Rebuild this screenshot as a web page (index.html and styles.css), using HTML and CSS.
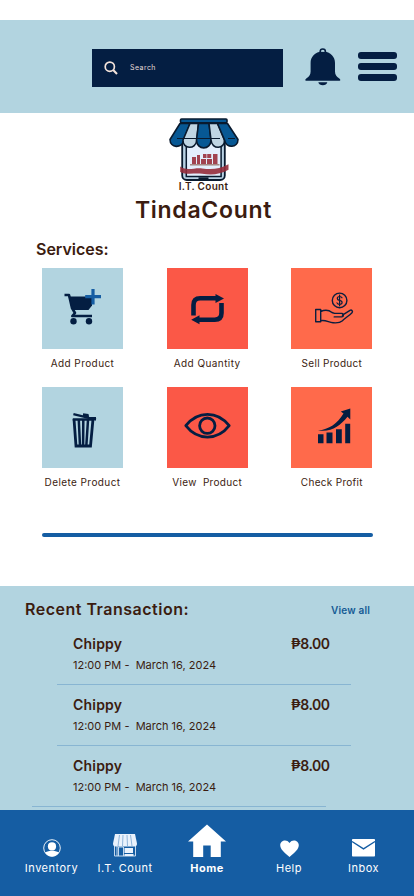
FILE: index.html
```html
<!DOCTYPE html>
<html lang="en">
<head>
<meta charset="utf-8">
<meta name="viewport" content="width=device-width, initial-scale=1">
<title>TindaCount</title>
<link rel="stylesheet" href="styles.css">
</head>
<body>
<header class="topbar">
  <div class="search">
    <svg width="14" height="14" viewBox="0 0 14 14" fill="none" stroke="#f3e3da" stroke-width="1.7"><circle cx="5.8" cy="5.7" r="4.6"/><path d="M9.2 9.1 13 12.9" stroke-width="2.1"/></svg>
    <span class="search-text">Search</span>
  </div>
  <svg class="bell" width="36" height="39" viewBox="0 0 36 39" fill="#041e42"><circle cx="17.8" cy="3.6" r="2.6" fill="none" stroke="#041e42" stroke-width="1.6"/><path d="M17.8 3.6C9.5 3.6 5.6 9.500 5.600 15v8.500c0 3.500-1.600 5-4 6.700-1.700 1.200-1.600 2.500-.6 2.500h33.600c1 0 1.100-1.300-.6-2.500-2.400-1.700-4-3.200-4-6.700V15c0-5.500-3.900-11.400-12.200-11.400Z"/><path d="M13.300 34.200h9c-.5 4-8.500 4-9 0Z"/><path d="M16.200 3.700a1.600 1.600 0 0 1 3.200 0Z" fill="#b2d4e0"/></svg>
  <div class="menu"><i></i><i></i><i></i></div>
</header>
<main>
  <section class="brand">
    <svg width="72" height="66" viewBox="0 0 72 66">
      <rect x="14.200" y="10" width="42.600" height="52" rx="4.500" fill="#b9d2e4" stroke="#091a2e" stroke-width="1.800"/>
      <rect x="18.300" y="10" width="34.800" height="48.500" fill="#e3effd" stroke="#091a2e" stroke-width="1.500"/>
      <path d="M30.500 60.300h10" stroke="#091a2e" stroke-width="2"/>
      <g fill="#a14350"><path d="M24 39h4v7h-4zM29 37h3v9h-3zM33 41h5v5h-5zM39 41h5v5h-5zM35 36h3.500v4H35zM39.200 36h4v4h-4zM45 36h4.500v10H45z"/></g>
      <path d="M22 46.800h29.500" stroke="#99766f" stroke-width="1.300"/>
      <path d="M12.200 48.600c7 4.800 14 .8 22 1.800 10 1.300 17 .6 26.300-4.200v5.600c-9 5-17 5.200-26.300 4-8-1-15 1.500-22-1.800Z" fill="#952c3b" fill-opacity=".9"/>
      <g stroke="#091a2e" stroke-width="1.600" stroke-linejoin="round">
        <path d="M12 5.500 2 21.500c0 8.700 12 9.200 13.500 1L22 5.500Z" fill="#075894"/>
        <path d="M22 5.500l-7 16.500c-.5 9.500 13 10 13.800 0L30.500 5.500Z" fill="#bfd5e3"/>
        <path d="M30.500 5.500l-2 16.500c0 10.500 14.500 10.500 14.500 0L41 5.500Z" fill="#075894"/>
        <path d="M41 5.500l2 16.500c.8 10 14 9.500 13.500 0L49.500 5.500Z" fill="#bfd5e3"/>
        <path d="M49.500 5.500l7 16.500c1.500 8.700 13.500 8.200 13.500-.5L59.500 5.500Z" fill="#075894"/>
        <rect x="12.500" y="1" width="46.500" height="3.800" rx="1" fill="#075894"/>
      </g>
      <path d="M9 20.500h43M60 20.500h7" stroke="#091a2e" stroke-width="1.200"/>
    </svg>
    <div class="tagline"><span>I.T. Count</span></div>
    <h1><span>TindaCount</span></h1>
  </section>
  <h2 class="services-title"><span>Services:</span></h2>
  <section class="grid">
    <div class="service"><div class="tile blue">
      <svg width="81" height="81" viewBox="0 0 81 81" fill="#041e42"><path d="M22.500 27h4.500l3 13 3 5-2.700 3H50" fill="none" stroke="#041e42" stroke-width="2.600" stroke-linejoin="round"/><path d="M26.500 28.500H50v9l-3.500 4.500H31.200Z"/><circle cx="31.500" cy="53.200" r="3.200"/><circle cx="47" cy="53.200" r="3.200"/><path d="M51 21v15.500M43.200 28.700H59" stroke="#155da3" stroke-width="3.200"/></svg>
    </div><span>Add Product</span></div>
    <div class="service"><div class="tile red">
      <svg width="81" height="81" viewBox="0 0 81 81" fill="none" stroke="#041e42" stroke-width="4.600"><path d="M26.500 47.500V37q0-6.700 6.700-6.700H49M54.500 35v10q0 6.700-6.700 6.700H32"/><path d="M48.500 26 57 30.500 48.500 35ZM32.500 47.300 24.200 51.700l8.300 4.500Z" fill="#041e42" stroke="none"/></svg>
    </div><span>Add Quantity</span></div>
    <div class="service"><div class="tile orange">
      <svg width="81" height="81" viewBox="0 0 81 81" fill="none" stroke="#0b1e3f" stroke-width="1.400" stroke-linejoin="round" stroke-linecap="round"><circle cx="48.600" cy="32.400" r="7.300"/><path d="M51 29.800q-.6-1.300-2.400-1.300-2.300 0-2.300 1.900 0 1.500 2.300 2 2.500.5 2.500 2.200 0 1.800-2.500 1.800-2 0-2.600-1.500M48.600 27v10.800" stroke-width="1.200"/><path d="M24.700 41.500h5v12.300h-5ZM29.700 43.500c4-1.800 8-1.700 11.300 1l2.500.9h7.500c1.900 0 1.900 3.500-.2 3.500h-7.600M51.400 47.200l7.600-4.900c1.800-.9 3.200 1.200 2 2.400-3.200 3.300-6.800 5.200-9.500 8-2.300 2-6.500 2.300-9.500 2-4.500-.5-7.500-3-12.300-2"/></svg>
    </div><span class="snug">Sell Product</span></div>
    <div class="service"><div class="tile blue">
      <svg width="81" height="81" viewBox="0 0 81 81" fill="none" stroke="#041e42"><path d="M32 32 34 59h14.500L51 32" stroke-width="2.800"/><path d="M30.800 32.500h20M36.800 33l1.200 26M41.300 33l-.2 26M46 33l-1.700 26" stroke-width="2.500"/><path d="M31.400 27.200 54 32.600M41 27.500l4.500.6.500 2" stroke-width="2.400"/><path d="M48 30h6v2.800h-5Z" fill="#041e42" stroke="none"/></svg>
    </div><span>Delete Product</span></div>
    <div class="service"><div class="tile red">
      <svg width="81" height="81" viewBox="0 0 81 81" fill="none" stroke="#041e42" stroke-width="2.800"><path d="M18.800 38.700C24.500 31.500 31 27.400 40.500 27.400s16 4.100 21.700 11.300C56.500 46 50 50.100 40.500 50.100S24.500 46 18.800 38.700Z" stroke-linejoin="round"/><circle cx="40.300" cy="38.700" r="7.700"/></svg>
    </div><span class="snug">View&nbsp; Product</span></div>
    <div class="service"><div class="tile orange">
      <svg width="81" height="81" viewBox="0 0 81 81" fill="#041e42"><path d="M27 47.200h5.500v9H27zM35.500 45.500h6v10.700h-6zM45 42.200h5.800v14H45zM54.200 36.700h5v19.500h-5z"/><path d="M27 43.500C38 42.500 46.500 36.500 52.500 26.500L49.800 24.600 59.300 21.600V32.500L56.500 29.800C49 39 40.500 45.500 27 43.500Z"/></svg>
    </div><span class="snug">Check Profit</span></div>
  </section>
  <div class="rule"></div>
  <section class="recent">
    <div class="recent-head"><h2><span>Recent Transaction:</span></h2><a>View all</a></div>
    <article class="entry"><div class="entry-top"><b>Chippy</b><em>₱8.00</em></div><p><span>12:00 PM -&nbsp; March 16, 2024</span></p></article>
    <article class="entry"><div class="entry-top"><b>Chippy</b><em>₱8.00</em></div><p><span>12:00 PM -&nbsp; March 16, 2024</span></p></article>
    <article class="entry last"><div class="entry-top"><b>Chippy</b><em>₱8.00</em></div><p><span>12:00 PM -&nbsp; March 16, 2024</span></p></article>
  </section>
</main>
<nav class="nav">
  <div class="item inventory"><svg width="18" height="18" viewBox="0 0 18 18" fill="#fff"><circle cx="9" cy="9" r="8.300" fill="none" stroke="#fff" stroke-width=".9"/><circle cx="9" cy="7.400" r="4.100"/><path d="M2 13.400c4.500-2.300 9.500-2.300 14 0-3.200 5.500-10.800 5.500-14 0Z"/></svg><span>Inventory</span></div>
  <div class="item shop"><svg width="26" height="24" viewBox="0 0 26 24"><path d="M3 1h20l2 9.500q0 3-2.500 3H3.500q-2.500 0-2.500-3Z" fill="#eaf2fc"/><path d="M7.500 2 6 13M11 2l-.5 11M15 2l.5 11M18.500 2 20 13" stroke="#79a5d0" stroke-width=".8"/><path d="M2.500 13v10h21V13M5 13v10M6.500 23v-9h5v9" fill="none" stroke="#d7e6f6" stroke-width=".9"/><path d="M12.500 15h8.500v5h-8.500zM12.500 21h9v2h-9z" fill="#eaf2fc"/></svg><span>I.T. Count</span></div>
  <div class="item home"><svg width="38" height="33" viewBox="0 0 38 33"><path d="M19 .5 38 17.500h-5.200V33H22.700V21.500h-7.500V33h-10V17.500H0Z" fill="#fff"/></svg><span>Home</span></div>
  <div class="item help"><svg width="19" height="17" viewBox="0 0 19 17"><path d="M9.500 17C4 12.500.2 9.300.2 5.100.2.400 6.700-1.600 9.500 3c2.800-4.600 9.300-2.600 9.300 2.100 0 4.200-3.800 7.400-9.300 11.900Z" fill="#fff"/></svg><span>Help</span></div>
  <div class="item inbox"><svg width="23" height="18" viewBox="0 0 23 18"><rect width="23" height="17.500" rx=".8" fill="#fff"/><path d="M0 2.500 11.500 9.800 23 2.500" fill="none" stroke="#155da3" stroke-width="1.400"/></svg><span>Inbox</span></div>
</nav>
</body>
</html>
```
FILE: styles.css
```css
* { box-sizing: border-box; }
body { margin: 0; padding-top: 20px; width: 414px; height: 896px; overflow: hidden; background: #fff; color: #3b1c10; font-family: Inter, "Liberation Sans", sans-serif; }
h1, h2, p { margin: 0; font-weight: 600; }
span, b, em, a { white-space: pre; }
svg { display: block; flex: none; }
.topbar { height: 93.400px; background: #b2d4e0; display: flex; align-items: flex-start; padding: 29px 0 0 92px; }
.search { width: 191px; height: 38px; background: #041e42; display: flex; align-items: center; padding-left: 12px; }
.search-text { color: #e6dcd8; font-size: 7px; margin: -1px 0 0 12px; letter-spacing: .45px; }
.bell { margin: -1.500px 0 0 22px; }
.menu { margin: 3px 0 0 17px; width: 39px; display: grid; gap: 4px; }
.menu i { height: 7px; border-radius: 3px; background: #041e42; }
.brand { height: 114px; padding-top: 4.600px; display: flex; flex-direction: column; align-items: center; padding-right: 7px; }
.tagline { height: 14px; line-height: 14px; font-size: 10px; font-weight: 600; margin-top: -4.600px; letter-spacing: .3px; }
.brand h1 { height: 32px; line-height: 32px; margin-top: .6px; font-size: 23px; letter-spacing: .7px; }
.services-title { height: 41px; line-height: 44px; padding-left: 36px; font-size: 16px; }
.grid { display: grid; grid-template-columns: repeat(3, 81px); column-gap: 43.700px; row-gap: 10px; padding-left: 42px; height: 264.600px; grid-auto-rows: 109px; }
.service { display: flex; flex-direction: column; align-items: center; font-size: 10px; line-height: 28px; letter-spacing: .42px; }
.snug { letter-spacing: .3px; }
.tile { width: 81px; height: 81px; flex: none; }
.blue { background: #b2d4e0; }
.red { background: #fb5847; }
.orange { background: #ff6a4b; }
.rule { width: 331px; height: 4px; margin: 0 0 48.600px 42px; border-radius: 2px; background: #155da3; }
.recent { height: 224px; background: #b2d4e0; padding-top: 9px; overflow: hidden; }
.recent-head { display: flex; height: 29px; padding-left: 25px; line-height: 28px; }
.recent-head h2 { width: 306px; font-size: 16px; letter-spacing: .5px; }
.recent-head a { color: #155a94; font-size: 10px; font-weight: 600; line-height: 30px; letter-spacing: .2px; }
.entry { width: 294px; height: 61px; margin-left: 57px; padding: 10px 0 0 16px; border-bottom: 1px solid #88b5d2; }
.entry-top { display: flex; height: 20px; line-height: 20px; font-size: 14px; font-weight: 600; }
.entry-top b { width: 218px; flex: none; font-weight: 600; letter-spacing: .2px; }
.entry-top em { font-style: normal; letter-spacing: -.5px; }
.entry p { font-size: 11px; font-weight: 400; line-height: 22px; }
.last { margin-left: 32px; padding-left: 41px; }
.nav { height: 87px; background: #155da3; color: #fff; display: flex; padding-left: 14px; font-size: 11px; letter-spacing: .5px; }
.item { display: flex; flex-direction: column; justify-content: flex-end; align-items: center; height: 67px; }
.item svg { margin-bottom: 2.500px; }
.item span { line-height: 17px; }
.inventory { width: 75px; }
.shop { width: 72px; }
.home { width: 92px; font-weight: 700; }
.help { width: 72px; }
.inbox { width: 77px; }
```
